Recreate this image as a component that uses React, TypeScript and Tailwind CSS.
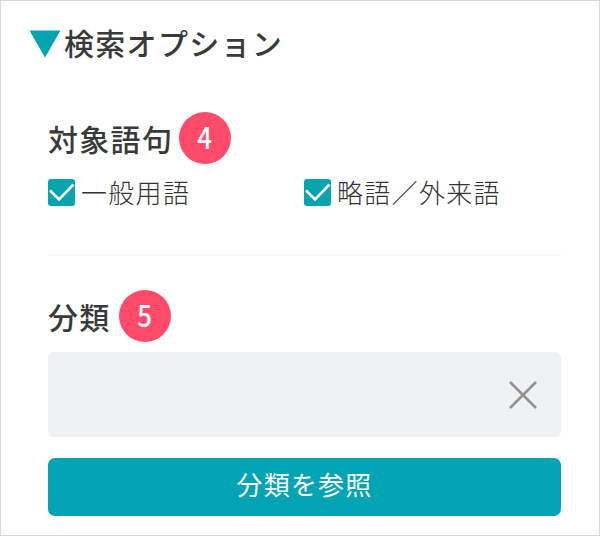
import React from 'react';

type BadgeProps = {
  value: string;
};

function Badge({value}: BadgeProps) {
  return (
    <span className="flex size-[52px] items-center justify-center rounded-full bg-[#ff4a69] pb-[4px] text-[30px] leading-none font-medium text-white">
      <span className="inline-block scale-x-[0.86]">{value}</span>
    </span>
  );
}

type OptionProps = {
  label: string;
};

function Option({label}: OptionProps) {
  return (
    <label className="flex h-[28px] w-[256px] items-center">
      <input type="checkbox" className="sr-only" defaultChecked/>
      <svg width="27" height="27" viewBox="0 0 27 27" fill="none" className="shrink-0">
        <rect width="27" height="27" rx="3" fill="#0aa3b0"/>
        <path d="M2 11.5L11 20.5L25.5 5.5" stroke="#fff" strokeWidth="2.6"/>
      </svg>
      <span className="ml-[6px] text-[26px] leading-none font-light tracking-[1.3px] whitespace-nowrap text-[#333]">{label}</span>
    </label>
  );
}

export default function App() {
  return (
    <div className="h-[536px] w-[600px] border border-[#d9d9d9] bg-white pt-[24px] pr-[38px] pl-[47px] font-['Noto_Sans_CJK_JP',sans-serif] text-[#3a3a3a]">
      <div className="-ml-[19px] flex h-[38px] items-center">
        <svg width="32" height="28" viewBox="0 0 32 28" className="shrink-0">
          <path d="M0.5 0.5H31.5L16 27.5Z" fill="#05a3b1"/>
        </svg>
        <h1 className="ml-[3px] pb-[4px] text-[30px] leading-none font-medium tracking-[1.3px] whitespace-nowrap">検索オプション</h1>
      </div>

      <div className="mt-[49px] flex h-[52px] items-center">
        <h2 className="w-[131px] text-[30px] leading-none font-medium tracking-[1.3px] whitespace-nowrap">対象語句</h2>
        <Badge value="4"/>
      </div>

      <div className="mt-[14px] flex">
        <Option label="一般用語"/>
        <Option label="略語／外来語"/>
      </div>

      <hr className="mt-[48px] border-t-2 border-[#f7f7f7]"/>

      <div className="mt-[34px] flex h-[52px] items-center">
        <h2 className="w-[71px] text-[30px] leading-none font-medium tracking-[1.3px] whitespace-nowrap">分類</h2>
        <Badge value="5"/>
      </div>

      <div className="mt-[10px] flex h-[85px] w-[513px] items-center justify-end rounded-[6px] bg-[#eff1f3] pr-[24px]">
        <button type="button" aria-label="クリア">
          <svg width="28" height="28" viewBox="0 0 28 28" stroke="#929292" strokeWidth="2.6">
            <path d="M1 1L27 27M27 1L1 27"/>
          </svg>
        </button>
      </div>

      <button type="button" className="mt-[21px] flex h-[58px] w-[513px] items-center justify-center rounded-[7px] bg-[#02a3b4] pb-[6px] text-[26px] leading-none tracking-[1.2px] text-white">
        分類を参照
      </button>
    </div>
  );
}
